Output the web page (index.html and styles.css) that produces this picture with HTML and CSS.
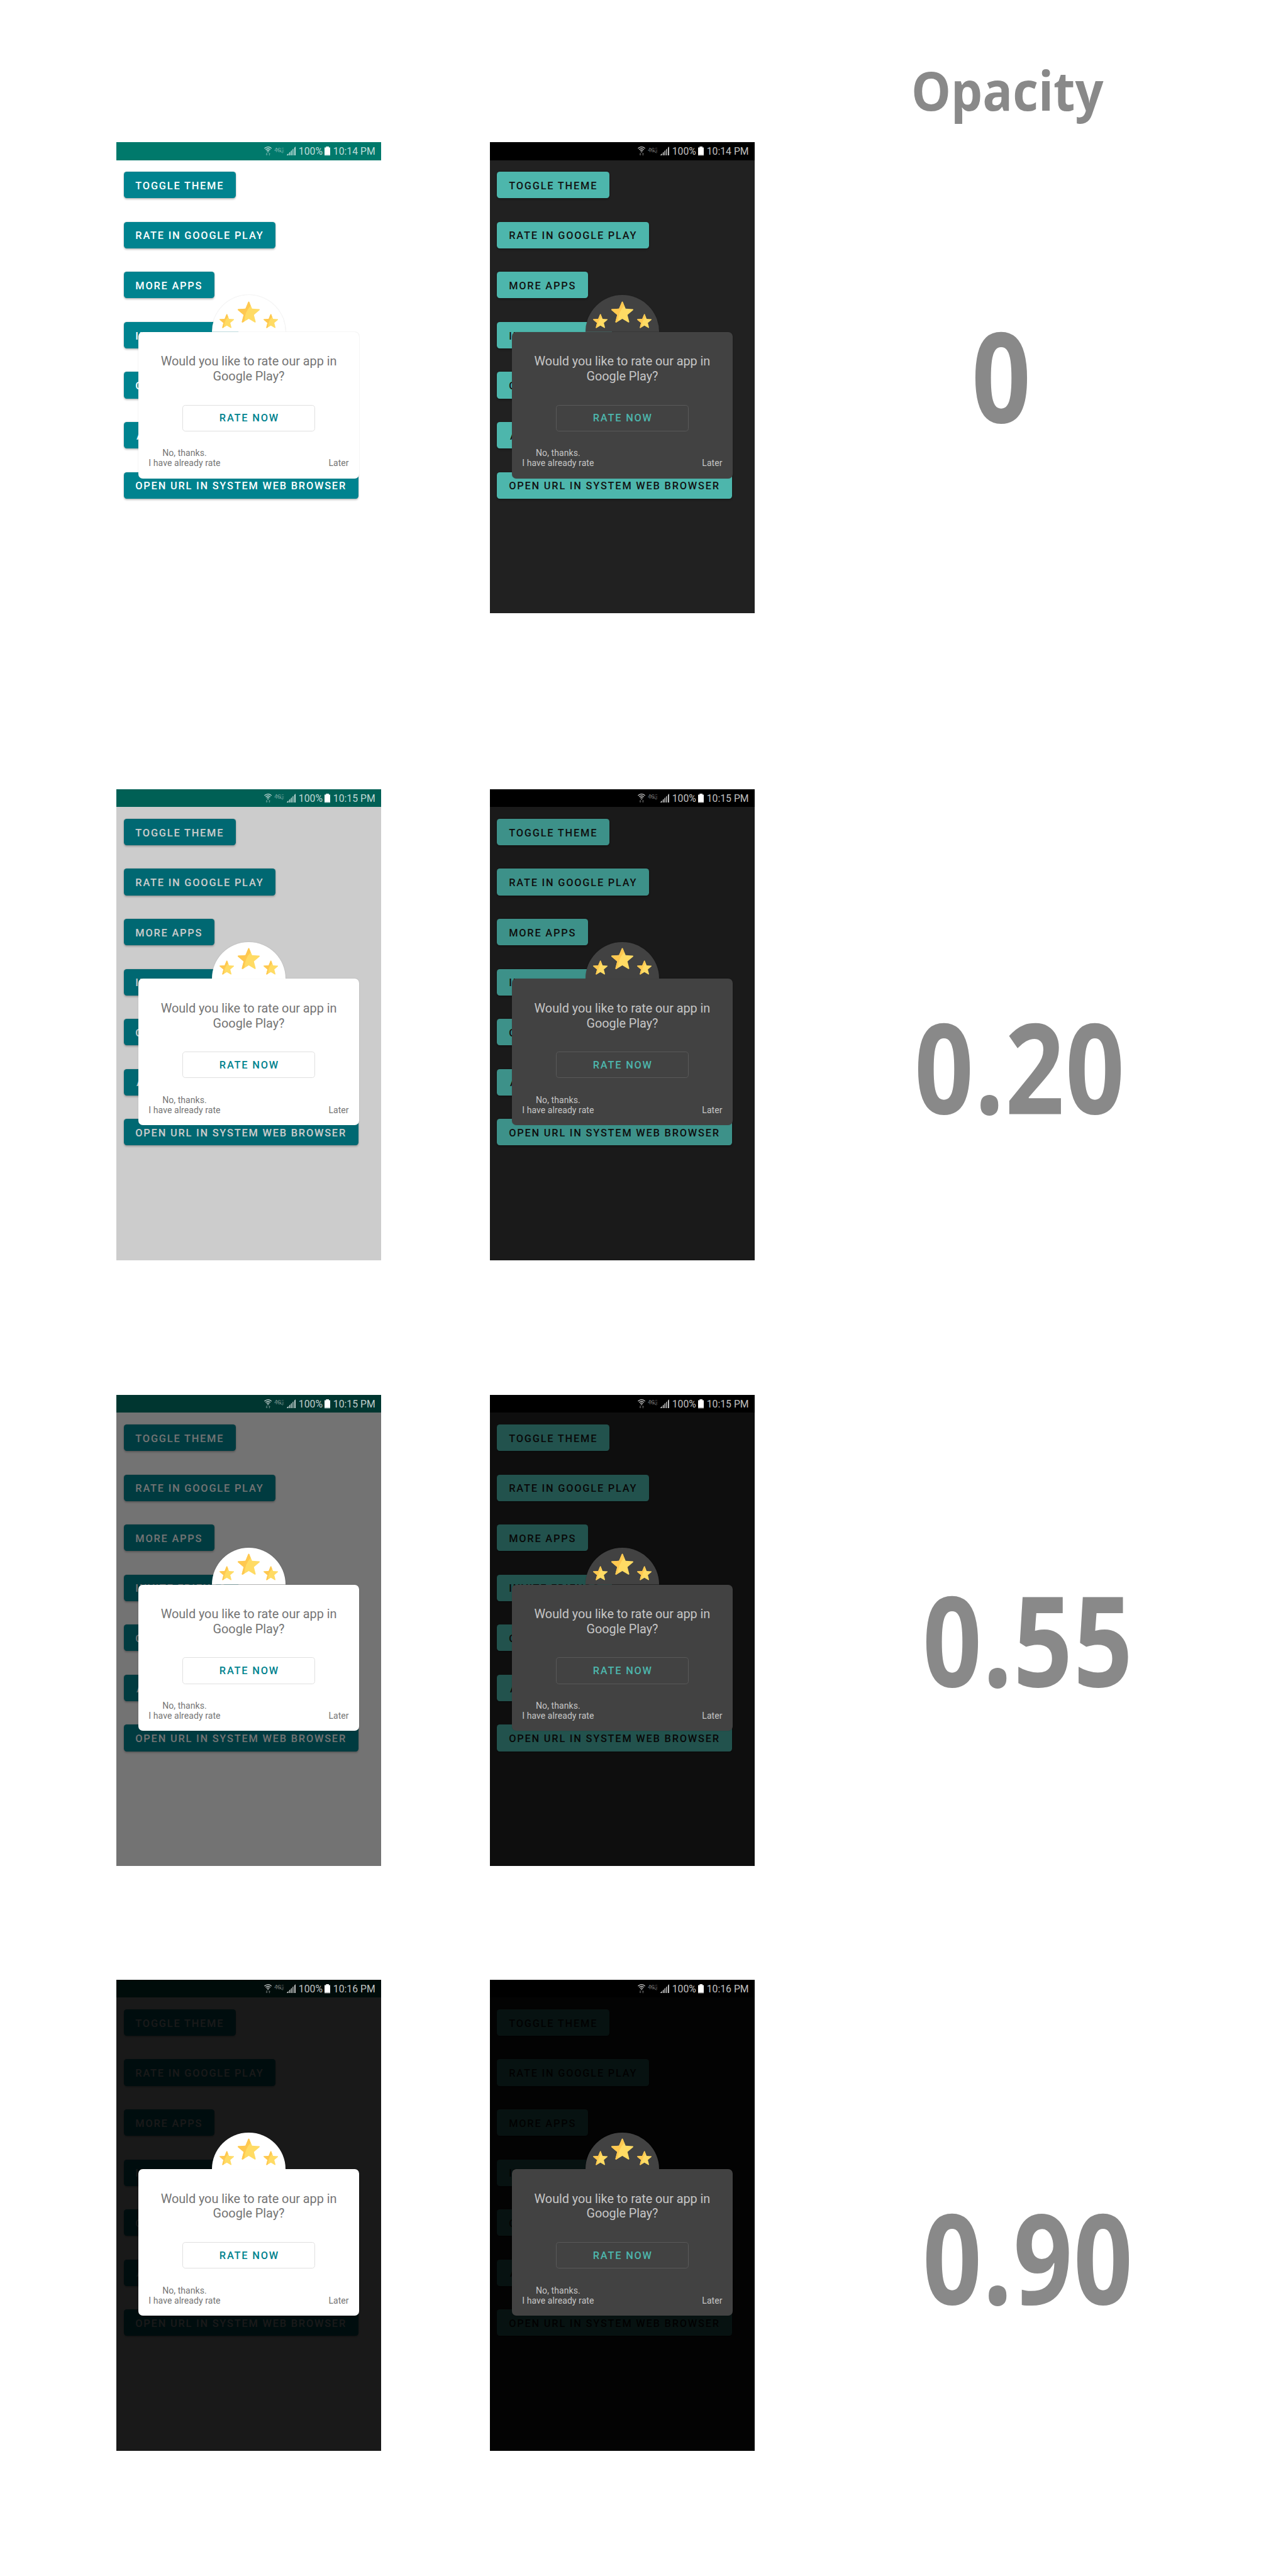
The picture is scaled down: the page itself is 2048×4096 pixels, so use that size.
FILE: index.html
```html
<!DOCTYPE html>
<html lang="en">
<head>
<meta charset="utf-8">
<title>Dialog dim opacity</title>
<link rel="stylesheet" href="styles.css">
</head>
<body>
<svg class="sprite" aria-hidden="true">
  <symbol id="wifi" viewBox="0 0 21 25">
    <g fill="none" stroke="#fff" stroke-opacity=".8" stroke-width="2.1">
      <path d="M.8 5.2Q10.5-2.8 20.2 5.2"/>
      <path d="M4 8.8Q10.500 3.200 17 8.800"/>
      <path d="M6.800 12.200Q10.500 9 14.200 12.200"/>
    </g>
    <path d="M8.300 13.800h4.400L10.500 16.200z" fill="#fff" fill-opacity=".9"/>
    <g fill="#fff" fill-opacity=".35">
      <path d="M5.800 17h2.400v4.200h1.800L7 24.500 4 21.200h1.800z"/>
      <path d="M13.200 24.500h2.400v-4.200h1.800L14.400 17l-3 3.300h1.800z"/>
    </g>
  </symbol>
  <symbol id="signal" viewBox="0 0 24 24">
    <path d="M0 24v-.8L4.600 18.600V24zM6.600 24v-7.200l2.800-2.800V24zM11.200 24V12.200l2.500-2.500V24zM15.600 24V8.200l2.500-2.500V24zM20.500 24V3.400L24 0v24z" fill="#fff" fill-opacity=".76"/>
  </symbol>
  <symbol id="battery" viewBox="0 0 16 25">
    <path d="M0 2.500h4V0h8v2.500h4v20H0z" fill="#fff"/>
    <path d="M0 22.500h16V25H0z" fill="#fff" fill-opacity=".76"/>
  </symbol>
  <symbol id="star" viewBox="0 0 60 60">
    <path d="M28.500 2.200q1.500-2.400 3 0L39 20.300 58.500 21.500q2.500.6.600 2.800L44 37 48.800 55.600q.2 3-2.400 2L30 47.800 13.600 57.600q-2.600 1-2.400-2L16 37 .9 24.300q-1.900-2.200.6-2.800L21 20.300z" fill="#ffdb64"/>
    <path d="M28.500 2.200q1.500-2.400 3 0L35 12.500Q19 29 18 54.900L13.600 57.600q-2.600 1-2.400-2L16 37 .9 24.300q-1.900-2.200.6-2.800L21 20.300z" fill="#ffc850"/>
  </symbol>
</svg>

<h1 class="heading"><span>Opacity</span></h1>
<main class="board" id="board"></main>

<template id="phone">
  <section class="phone">
    <div class="app">
      <div class="app-bar"></div>
      <div class="buttons">
        <button class="btn">TOGGLE THEME</button>
        <button class="btn">RATE IN GOOGLE PLAY</button>
        <button class="btn">MORE APPS</button>
        <button class="btn">INVITE FRIENDS</button>
        <button class="btn">CONTACT US</button>
        <button class="btn">ABOUT</button>
        <button class="btn">OPEN URL IN SYSTEM WEB BROWSER</button>
      </div>
    </div>
    <div class="scrim"></div>
    <div class="status">
      <svg class="i-wifi"><use href="#wifi"/></svg>
      <svg class="i-lte" viewBox="0 0 27 16">
        <g fill="#fff" fill-opacity=".32" font-family="Roboto, sans-serif" font-weight="700">
          <text x="0" y="11.5" font-size="14" textLength="19" lengthAdjust="spacingAndGlyphs">4G</text>
          <text transform="translate(20.5 0) rotate(90)" font-size="7.5" textLength="14" lengthAdjust="spacingAndGlyphs">LTE</text>
        </g>
        <path d="M5 .5 23.5 14.5" stroke="#fff" stroke-opacity=".35" stroke-width="1.5"/>
      </svg>
      <svg class="i-signal"><use href="#signal"/></svg>
      <span class="percent">100%</span>
      <svg class="i-battery"><use href="#battery"/></svg>
      <span class="clock"></span>
    </div>
    <div class="dialog">
      <div class="badge">
        <svg class="star"><use href="#star"/></svg>
        <svg class="star star-big"><use href="#star"/></svg>
        <svg class="star"><use href="#star"/></svg>
      </div>
      <div class="card">
        <p class="question">Would you like to rate our app in<br>Google Play?</p>
        <button class="rate">RATE NOW</button>
        <div class="actions">
          <span class="decline">No, thanks.<br>I have already rate</span>
          <span>Later</span>
        </div>
      </div>
    </div>
  </section>
</template>
<script src="app.js"></script>
</body>
</html>
```
FILE: styles.css
```css
/* 0.01rem is one physical pixel of the phone's 720x1280 screen */
html { font-size: 58.5142857px; background: #fff; }
* { box-sizing: border-box; margin: 0; }
body { width: 35rem; height: 70rem; overflow: hidden; font-family: Roboto, sans-serif; }
svg { display: block; flex: none; }
.sprite { display: none; }

.heading, .value { font-family: "Open Sans", sans-serif; font-weight: 700; color: #898989; line-height: 1; white-space: nowrap; }
.heading { height: 3.87rem; padding: 1.73rem 0 0 24.76rem; font-size: 1.46rem; }
.heading span, .value span { display: inline-block; transform-origin: 0 0; }
.heading span { transform: scaleX(.928); }

.row { display: flex; padding-left: 3.16rem; }
.row-0 { height: 17.58rem; }
.row-1 { height: 16.46rem; }
.row-2 { height: 15.89rem; }
.row-3 { height: 16.2rem; }
.value { font-size: 3.42rem; letter-spacing: .035rem; }
.value span { transform: scaleX(.822); }
.row-0 .value { padding: 4.59rem 0 0 5.9rem; }
.row-1 .value { padding: 5.79rem 0 0 4.34rem; }
.row-2 .value { padding: 4.9rem 0 0 4.56rem; }
.row-3 .value { padding: 5.8rem 0 0 4.56rem; }

.phone { position: relative; flex: none; width: 7.2rem; height: 12.8rem; overflow: hidden; }
.phone + .phone { margin-left: 2.95rem; }
.light { --bar: #00796b; --page: #fff; --btn: #00838f; --btn-text: #fff; --card: #fff; --text: #757575; --line: #e0e0e0; --accent: #00838f; }
.dark { --bar: #000; --page: #212121; --btn: #4db6ac; --btn-text: #121212; --card: #424242; --text: #c6c6c6; --line: #595959; --accent: #4db6ac; }

.app { height: 100%; background: var(--page); }
.app-bar { height: .48rem; background: var(--bar); }
.buttons { display: flex; flex-direction: column; align-items: flex-start; gap: .64rem; padding: .32rem .2rem; }
.btn, .rate { border: 0; border-radius: .08rem; font: 500 .28rem/.36rem Roboto, sans-serif; letter-spacing: .0305rem; white-space: nowrap; }
.btn { height: .72rem; min-width: 1.76rem; padding: .04rem .32rem 0; background: var(--btn); color: var(--btn-text); box-shadow: 0 .03rem .05rem rgba(0,0,0,.24), 0 0 .03rem rgba(0,0,0,.16); }

.scrim { position: absolute; inset: 0; background: #000; opacity: var(--dim); }

.status { position: absolute; top: 0; left: 0; width: 100%; height: .48rem; display: flex; align-items: flex-start; padding: .12rem 0 0 4.02rem; color: rgba(255,255,255,.76); font-size: .27rem; line-height: .24rem; white-space: nowrap; }
.i-wifi { width: .21rem; height: .25rem; margin-right: .07rem; }
.i-lte { width: .27rem; height: .16rem; margin: .02rem .06rem 0 0; }
.i-signal { width: .24rem; height: .24rem; margin-right: .085rem; }
.percent { width: .705rem; }
.i-battery { width: .16rem; height: .25rem; margin-right: .075rem; }
.percent, .clock { padding-top: .01rem; }

.dialog { position: absolute; top: 4.15rem; left: .6rem; width: 6rem; display: flex; flex-direction: column; align-items: center; }
.badge { position: relative; z-index: 1; width: 2rem; height: 1rem; display: flex; align-items: flex-start; justify-content: center; gap: .1rem; padding-top: .5rem; border-radius: 1rem 1rem 0 0; background: var(--card); box-shadow: 0 0 .03rem rgba(0,0,0,.16); clip-path: inset(-.1rem -.1rem 0 -.1rem); }
.star { width: .4rem; height: .4rem; }
.star-big { width: .6rem; height: .6rem; margin-top: -.34rem; }
.card { width: 100%; display: flex; flex-direction: column; align-items: center; padding: .61rem .28rem .27rem; border-radius: .12rem; background: var(--card); box-shadow: 0 0 .03rem rgba(0,0,0,.16); color: var(--text); }
.question { font-size: .34rem; line-height: .4rem; letter-spacing: -.001rem; text-align: center; white-space: nowrap; }
.rate { width: 3.6rem; height: .72rem; margin: .57rem 0 .45rem; padding: .01rem 0 0 .03rem; border: .02rem solid var(--line); background: none; color: var(--accent); }
.actions { width: 100%; display: flex; justify-content: space-between; align-items: flex-end; font-size: .24rem; line-height: .28rem; letter-spacing: .001rem; }
.decline { text-align: center; }
```
FILE: app.js
```js
const rows = [
  { value: "0", dim: 0, time: "10:14 PM" },
  { value: "0.20", dim: 0.2, time: "10:15 PM" },
  { value: "0.55", dim: 0.55, time: "10:15 PM" },
  { value: "0.90", dim: 0.9, time: "10:16 PM" }
];
const board = document.getElementById("board");
const template = document.getElementById("phone");

rows.forEach((data, i) => {
  const row = document.createElement("div");
  row.className = `row row-${i}`;
  for (const theme of ["light", "dark"]) {
    const phone = template.content.firstElementChild.cloneNode(true);
    phone.classList.add(theme);
    phone.style.setProperty("--dim", data.dim);
    phone.querySelector(".clock").textContent = data.time;
    row.append(phone);
  }
  const value = document.createElement("div");
  value.className = "value";
  value.innerHTML = `<span>${data.value}</span>`;
  row.append(value);
  board.append(row);
});
```
